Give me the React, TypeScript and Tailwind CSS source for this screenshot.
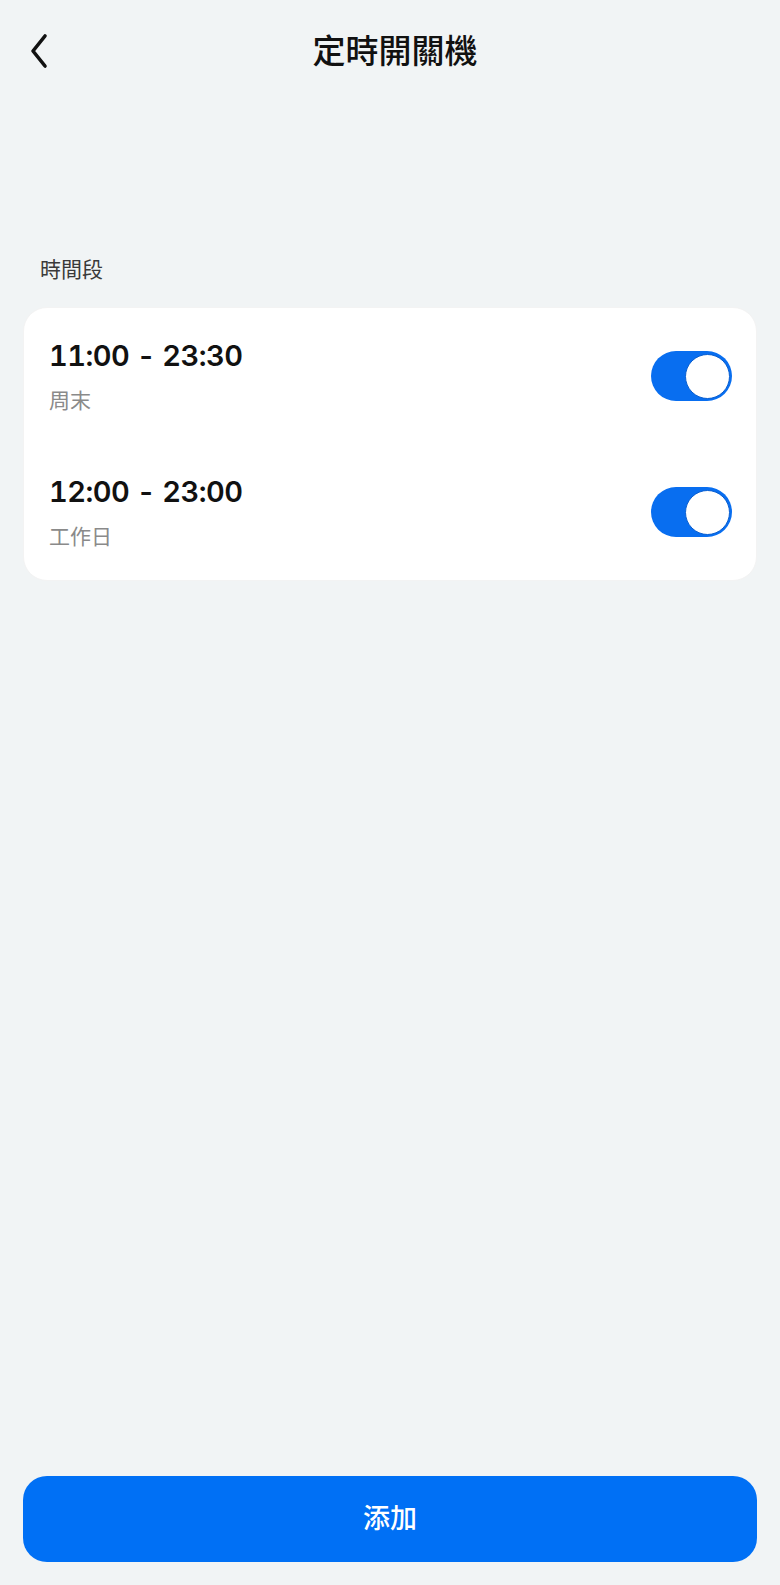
import React from "react";

function Toggle() {
  return (
    <div className="flex h-[50px] w-[81px] items-center justify-end rounded-full bg-[#086ef0] pr-[2px]">
      <div className="h-[45px] w-[45px] rounded-full border-[1.5px] border-[#0a5fd0] bg-white" />
    </div>
  );
}

function Row({ time, sub }: { time: string; sub: string }) {
  return (
    <div className="flex h-[136px] items-center justify-between pl-[25px] pr-[24px]">
      <div className="flex flex-col">
        <div className="text-[29px] font-semibold tabular-nums leading-[36px] tracking-[-0.5px] text-[#111]">{time}</div>
        <div className="mt-[13px] text-[21px] leading-[28px] text-[#8a8a8a]">{sub}</div>
      </div>
      <Toggle />
    </div>
  );
}

export default function App() {
  return (
    <div
      className="flex min-h-[1585px] w-full flex-col bg-[#f1f4f5]"
      style={{ fontFamily: "Inter, 'Noto Sans CJK TC', sans-serif" }}
    >
      <div className="grid h-[102px] grid-cols-[80px_1fr_80px] items-center">
        <div className="pl-[29px]">
          <svg width="20" height="36" viewBox="0 0 20 36" fill="none">
            <path d="M16 3 L4 18 L16 33" stroke="#111" strokeWidth="3.6" strokeLinecap="round" strokeLinejoin="round" />
          </svg>
        </div>
        <div className="pl-[10px] text-center text-[33px] font-medium leading-[40px] text-[#111]">定時開關機</div>
        <div />
      </div>

      <div className="mt-[154px] pl-[40px] text-[21px] leading-[28px] text-[#3a3a3a]">時間段</div>

      <div className="mx-[23px] mt-[23px] rounded-[24px] border border-[#f3f3f3] bg-white">
        <Row time="11:00 - 23:30" sub="周末" />
        <Row time="12:00 - 23:00" sub="工作日" />
      </div>

      <div className="mx-[23px] mb-[23px] mt-auto flex h-[86px] items-center justify-center rounded-[24px] bg-[#0070f5] text-[27px] font-medium text-white">
        添加
      </div>
    </div>
  );
}
